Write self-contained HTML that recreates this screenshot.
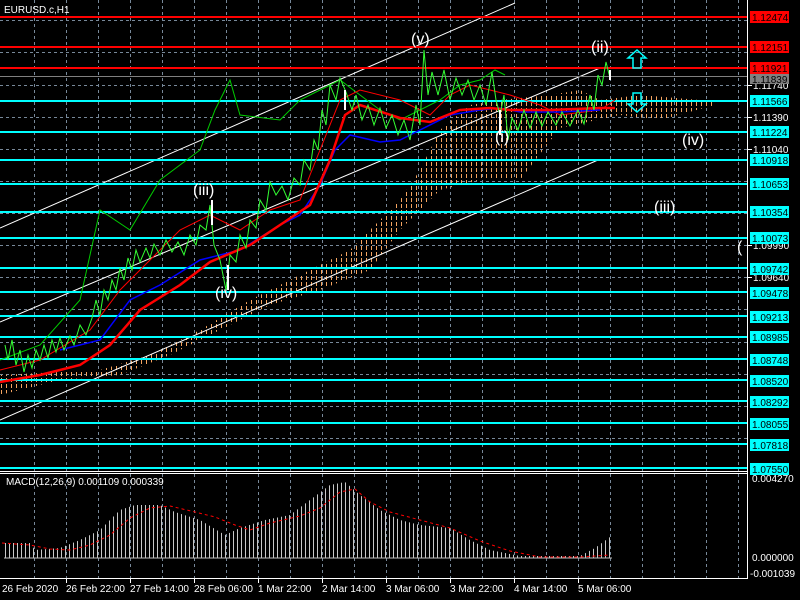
<!DOCTYPE html>
<html><head><meta charset="utf-8"><style>
html,body{margin:0;padding:0;background:#000;width:800px;height:600px;overflow:hidden}
svg{display:block}
text{font-family:"Liberation Sans",sans-serif;font-size:10px;fill:#fff}
text.k{fill:#000}
.r{font-size:16px}
</style></head><body>
<svg width="800" height="600" viewBox="0 0 800 600">
<defs>
<pattern id="hb" width="4" height="4" patternUnits="userSpaceOnUse"><rect x="1" y="0" width="1" height="4" fill="#c8c8c8" shape-rendering="crispEdges"/></pattern>
<pattern id="cl" width="5" height="6" patternUnits="userSpaceOnUse"><rect x="1" y="0" width="1" height="4" fill="#f4a460" shape-rendering="crispEdges"/></pattern>
</defs>
<rect width="800" height="600" fill="#000"/>
<g stroke="#778899" stroke-dasharray="3,3" stroke-width="1">
<path d="M34.5 0V578M66.5 0V578M98.5 0V578M130.5 0V578M162.5 0V578M194.5 0V578M226.5 0V578M258.5 0V578M290.5 0V578M322.5 0V578M354.5 0V578M386.5 0V578M418.5 0V578M450.5 0V578M482.5 0V578M514.5 0V578M546.5 0V578M578.5 0V578M610.5 0V578M642.5 0V578M674.5 0V578M706.5 0V578M738.5 0V578"/>
<path d="M0 20.5H747M0 52.5H747M0 85.5H747M0 117.5H747M0 149.5H747M0 181.5H747M0 213.5H747M0 245.5H747M0 277.5H747M0 309.5H747M0 342.5H747M0 374.5H747M0 406.5H747M0 438.5H747"/>
</g>
<polygon fill="url(#cl)" points="0,375 100,370 150,355 200,330 250,300 300,275 350,250 380,220 400,200 420,170 440,130 470,105 500,100 550,95 580,90 600,100 640,95 700,100 715,100 715,105 660,120 620,115 560,128 520,180 480,180 440,190 400,230 370,270 320,290 270,305 220,330 170,355 120,375 60,380 0,395"/>
<g stroke="#fff" stroke-width="1">
<line x1="0" y1="228" x2="515" y2="3"/>
<line x1="0" y1="322" x2="600" y2="68"/>
<line x1="0" y1="420" x2="598" y2="160"/>
</g>
<g stroke="#00ffff" stroke-width="2">
<path d="M0 101H747M0 132H747M0 160H747M0 184H747M0 212H747M0 238H747M0 268H747M0 292H747M0 316H747M0 337H747M0 359H747M0 380H747M0 401H747M0 423H747M0 444H747M0 468H747"/>
</g>
<path d="M0 76.5H747" stroke="#808080"/>
<g stroke="#ff0000" stroke-width="2"><path d="M0 17H747M0 47H747M0 68H747"/></g>
<polyline fill="none" stroke="#00cc00" stroke-width="1" points="0,360 40,345 80,300 100,210 130,230 160,180 200,150 215,110 230,80 240,115 280,120 300,100 320,90 340,80 360,95 380,110 400,120 420,110 440,100 460,85 480,80 495,70 505,75"/>
<polyline fill="none" stroke="#ff0000" stroke-width="1" points="0,370 40,360 90,330 120,290 150,260 180,230 210,215 240,230 270,210 300,200 320,150 340,100 360,90 400,100 430,115 450,95 470,85 490,90 510,95 540,105 560,115 600,110 615,100"/>
<polyline fill="none" stroke="#0000ff" stroke-width="1.5" points="60,350 100,340 130,300 160,285 200,260 240,250 280,225 300,215 320,185 335,150 350,135 380,142 400,140 420,130 450,115 480,110 500,108 520,112 560,112 600,110"/>
<polyline fill="none" stroke="#ff0000" stroke-width="2.5" points="0,382 40,375 80,365 110,345 140,310 180,285 210,262 250,245 280,225 310,205 330,160 345,115 360,105 400,118 430,122 460,110 490,108 510,110 550,110 600,108 615,108"/>
<polyline fill="none" stroke="#33ff33" stroke-width="1" points="5,345 8,360 12,340 16,365 20,350 24,372 28,355 32,368 36,350 40,360 44,345 48,358 52,340 56,352 60,338 64,350 70,336 74,345 80,325 86,335 92,318 96,300 100,315 104,290 108,300 112,280 116,290 120,268 124,280 128,258 132,270 136,250 140,262 146,248 150,258 154,244 160,255 166,240 172,252 178,242 184,255 190,235 196,245 200,225 206,230 210,205 214,245 220,260 226,290 230,255 236,262 240,235 246,248 250,220 256,228 260,200 266,210 270,182 276,195 282,186 288,200 294,178 300,185 304,160 310,170 314,140 318,150 322,110 326,125 330,85 336,100 340,78 346,92 352,110 356,95 362,120 368,105 374,125 380,108 386,128 392,115 398,135 404,120 410,140 416,105 420,125 424,50 428,95 432,72 438,95 444,70 450,100 456,78 462,95 468,80 474,100 480,85 486,105 492,72 496,100 500,115 504,95 508,140 512,118 518,130 524,110 530,128 536,112 542,126 548,112 556,125 562,112 570,126 578,110 584,124 590,95 594,110 598,75 602,85 606,62 610,78"/>
<g stroke="#fff" stroke-width="2"><path d="M212 200V225M228 265V290M345 90V110M500 110V135M610 70V80"/></g>
<text class="r" x="411" y="44">(v)</text>
<text class="r" x="591" y="52">(ii)</text>
<text class="r" x="193" y="195">(iii)</text>
<text class="r" x="215" y="298">(iv)</text>
<text class="r" x="654" y="212">(iii)</text>
<text class="r" x="682" y="145">(iv)</text>
<text class="r" x="495" y="142">(i)</text>
<text class="r" x="737" y="252">(</text>
<path d="M637 50L628 58H633V68H641V58H646Z" fill="none" stroke="#00ffff" stroke-width="1.5"/>
<path d="M637 112L628 104H633V93H641V104H646Z" fill="none" stroke="#00ffff" stroke-width="1.5"/>
<text x="4" y="13">EURUSD.c,H1</text>
<path d="M0 471.5H748M0 473.5H748M747.5 0V578M0 578.5H748" stroke="#fff" stroke-width="1" fill="none"/>
<polygon fill="url(#hb)" points="4,558 4,543 30,543 35,550 60,548 80,540 100,530 120,510 135,505 160,505 175,512 200,520 225,535 240,528 265,520 290,515 310,500 330,485 345,482 360,495 380,510 400,520 420,525 450,528 470,540 490,550 520,556 580,556 595,548 610,537 610,558"/>
<path d="M4 558H612" stroke="#c0c0c0"/>
<polyline fill="none" stroke="#ff0000" stroke-dasharray="3,3" points="2,543 30,545 50,549 70,550 90,545 110,535 130,518 150,508 170,506 195,512 215,517 235,525 250,530 270,523 300,516 320,508 340,492 355,489 370,502 390,512 420,520 450,528 480,541 510,551 540,557 580,557 610,555"/>
<text x="6" y="485">MACD(12,26,9) 0.001109 0.000339</text>
<g stroke="#fff"><path d="M747 85.5H752M747 117.5H752M747 149.5H752M747 245.5H752M747 277.5H752"/></g>
<text x="753" y="89">1.11740</text><text x="753" y="121">1.11390</text><text x="753" y="153">1.11040</text><text x="753" y="249">1.09990</text><text x="753" y="281">1.09640</text>
<g fill="#ff0000"><rect x="750" y="11" width="39" height="12"/><rect x="750" y="41" width="39" height="12"/><rect x="750" y="62" width="39" height="12"/></g>
<rect x="750" y="74" width="39" height="10" fill="#808080"/>
<g fill="#00ffff">
<rect x="750" y="95" width="39" height="12"/><rect x="750" y="126" width="39" height="12"/><rect x="750" y="154" width="39" height="12"/><rect x="750" y="178" width="39" height="12"/><rect x="750" y="206" width="39" height="12"/><rect x="750" y="232" width="39" height="12"/><rect x="750" y="263" width="39" height="12"/><rect x="750" y="287" width="39" height="12"/><rect x="750" y="311" width="39" height="12"/><rect x="750" y="331" width="39" height="12"/><rect x="750" y="354" width="39" height="12"/><rect x="750" y="375" width="39" height="12"/><rect x="750" y="396" width="39" height="12"/><rect x="750" y="418" width="39" height="12"/><rect x="750" y="439" width="39" height="12"/><rect x="750" y="463" width="39" height="12"/>
</g>
<text class="k" x="752" y="21">1.12474</text><text class="k" x="752" y="51">1.12151</text><text class="k" x="752" y="72">1.11921</text><text class="k" x="752" y="83">1.11839</text>
<text class="k" x="752" y="105">1.11566</text><text class="k" x="752" y="136">1.11224</text><text class="k" x="752" y="164">1.10918</text><text class="k" x="752" y="188">1.10653</text><text class="k" x="752" y="216">1.10354</text><text class="k" x="752" y="242">1.10073</text><text class="k" x="752" y="273">1.09742</text><text class="k" x="752" y="297">1.09478</text><text class="k" x="752" y="321">1.09213</text><text class="k" x="752" y="341">1.08985</text><text class="k" x="752" y="364">1.08748</text><text class="k" x="752" y="385">1.08520</text><text class="k" x="752" y="406">1.08292</text><text class="k" x="752" y="428">1.08055</text><text class="k" x="752" y="449">1.07818</text><text class="k" x="752" y="473">1.07550</text>
<text x="752" y="482">0.004270</text><text x="752" y="561">0.000000</text><text x="750" y="577">-0.001039</text>
<g stroke="#fff"><path d="M66.5 578V583M130.5 578V583M194.5 578V583M258.5 578V583M322.5 578V583M386.5 578V583M450.5 578V583M514.5 578V583M578.5 578V583"/></g>
<text x="2" y="592">26 Feb 2020</text><text x="66" y="592">26 Feb 22:00</text><text x="130" y="592">27 Feb 14:00</text><text x="194" y="592">28 Feb 06:00</text><text x="258" y="592">1 Mar 22:00</text><text x="322" y="592">2 Mar 14:00</text><text x="386" y="592">3 Mar 06:00</text><text x="450" y="592">3 Mar 22:00</text><text x="514" y="592">4 Mar 14:00</text><text x="578" y="592">5 Mar 06:00</text>
</svg>
</body></html>
